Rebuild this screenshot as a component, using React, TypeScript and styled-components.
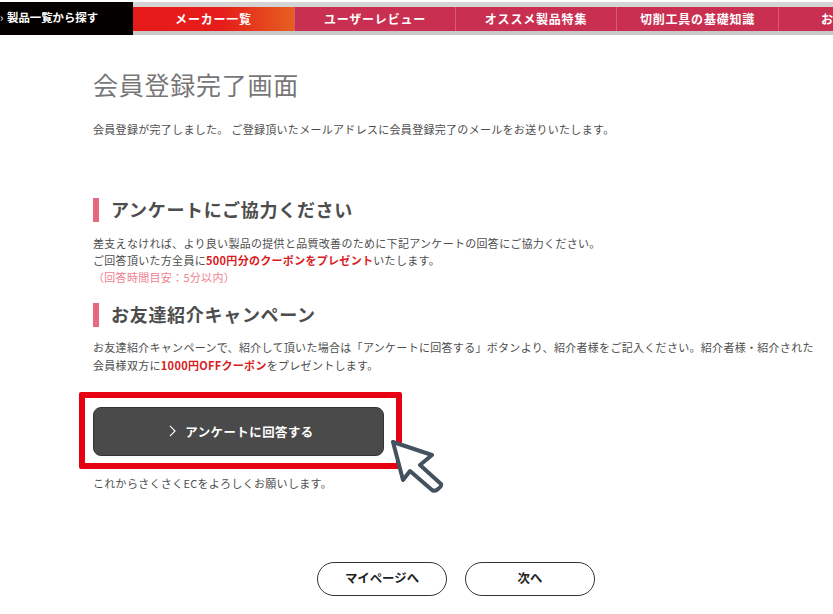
import styled, { createGlobalStyle } from "styled-components";

const GlobalStyle = createGlobalStyle`
  html, body {
    margin: 0;
    padding: 0;
    background: #fff;
    overflow: hidden;
  }
  body {
    font-family: "Noto Sans CJK JP", "Noto Sans", sans-serif;
    color: #4d4d4d;
  }
`;

const navItems = [
  { label: "メーカー一覧", width: 162, active: true },
  { label: "ユーザーレビュー", width: 161 },
  { label: "オススメ製品特集", width: 161 },
  { label: "切削工具の基礎知識", width: 162 },
  { label: "お問い合わせ", width: 162 },
];

const App = () => {
  return (
    <Page>
      <GlobalStyle />
      <Nav>
        <SearchTab>
          <TabArrow>›</TabArrow>製品一覧から探す
        </SearchTab>
        <NavBar>
          {navItems.map((item) => (
            <NavItem key={item.label} $width={item.width} $active={item.active}>
              {item.label}
            </NavItem>
          ))}
        </NavBar>
      </Nav>
      <Main>
        <Title>会員登録完了画面</Title>
        <Lead>
          会員登録が完了しました。 ご登録頂いたメールアドレスに会員登録完了のメールをお送りいたします。
        </Lead>
        <Heading $top={60}>アンケートにご協力ください</Heading>
        <Text $top={13} $leading={17}>
          差支えなければ、より良い製品の提供と品質改善のために下記アンケートの回答にご協力ください。
          <br />
          ご回答頂いた方全員に<Strong>500円分のクーポンをプレゼント</Strong>いたします。
          <br />
          <Note>（回答時間目安：5分以内）</Note>
        </Text>
        <Heading $top={17}>お友達紹介キャンペーン</Heading>
        <Text $top={11} $leading={18}>
          お友達紹介キャンペーンで、紹介して頂いた場合は「アンケートに回答する」ボタンより、紹介者様をご記入ください。紹介者様・紹介された
          <br />
          会員様双方に<Strong>1000円OFFクーポン</Strong>をプレゼントします。
        </Text>
        <CtaWrap>
          <Cta>
            <ChevronIcon viewBox="0 0 8 14">
              <path d="M1 1l6 6-6 6" fill="none" stroke="#fff" strokeWidth="1.3" />
            </ChevronIcon>
            アンケートに回答する
          </Cta>
          <Frame />
          <PointerIcon viewBox="0 0 53 53">
            <path
              d="M2 2 L41 15 L29 25 L50 44 Q51 46 47 49 Q44 52 41 50 L19 31 L12 40 Z"
              fill="#fff"
              stroke="#44525f"
              strokeWidth="4"
              strokeLinejoin="round"
            />
          </PointerIcon>
        </CtaWrap>
        <Closing>これからさくさくECをよろしくお願いします。</Closing>
        <Actions>
          <PillButton>マイページへ</PillButton>
          <PillButton>次へ</PillButton>
        </Actions>
      </Main>
    </Page>
  );
};

const Page = styled.div`
  width: 833px;
  height: 614px;
  overflow: hidden;
`;

const Nav = styled.nav`
  display: flex;
  margin-top: 2px;
  height: 33px;
  padding-top: 2px;
  background: linear-gradient(#d4d4d4 0 5px, transparent 5px 29px, #c8c8c8 29px);
  box-sizing: border-box;
`;

const SearchTab = styled.div`
  flex: 0 0 133px;
  margin-top: -2px;
  height: 33px;
  background: #040000;
  color: #fff;
  font-size: 11.4px;
  font-weight: 700;
  line-height: 30px;
  white-space: nowrap;
  box-sizing: border-box;
  display: flex;
  overflow: hidden;
`;

const TabArrow = styled.span`
  width: 7px;
  font-weight: 400;
`;

const NavBar = styled.div`
  display: flex;
  flex: 1;
  height: 24px;
  margin-top: 3px;
  background: #c92f50;
  overflow: hidden;
`;

const NavItem = styled.div<{ $width: number; $active?: boolean }>`
  flex: 0 0 ${(p) => p.$width}px;
  box-sizing: border-box;
  text-align: center;
  color: #fff;
  font-size: 12px;
  font-weight: 700;
  letter-spacing: 0.8px;
  line-height: 23px;
  white-space: nowrap;
  border-right: 1px solid #d65c76;
  background: ${(p) =>
    p.$active ? "linear-gradient(90deg, #e61a1a 0%, #e61c1a 55%, #e56020 100%)" : "transparent"};
`;

const Main = styled.main`
  padding: 0 0 0 93px;
`;

const Title = styled.h1`
  margin: 31px 0 0;
  font-size: 25px;
  font-weight: 400;
  letter-spacing: 0.75px;
  line-height: 36px;
  color: #777;
`;

const Lead = styled.p`
  margin: 19px 0 0;
  font-size: 11px;
  letter-spacing: 0.3px;
  line-height: 17px;
  white-space: nowrap;
`;

const Heading = styled.h2<{ $top: number }>`
  margin: ${(p) => p.$top}px 0 0;
  height: 24px;
  padding-left: 12px;
  border-left: 6px solid #e8697f;
  font-size: 18px;
  font-weight: 700;
  letter-spacing: 0.7px;
  line-height: 22px;
  color: #4d4d4d;
  white-space: nowrap;
`;

const Text = styled.p<{ $top: number; $leading: number }>`
  margin: ${(p) => p.$top}px 0 0;
  font-size: 11px;
  letter-spacing: 0.3px;
  line-height: ${(p) => p.$leading}px;
  white-space: nowrap;
`;

const Strong = styled.strong`
  color: #d91c24;
  font-weight: 700;
`;

const Note = styled.span`
  color: #ee7f8f;
`;

const CtaWrap = styled.div`
  position: relative;
  width: 291px;
  margin-top: 33px;
`;

const Cta = styled.div`
  height: 49px;
  box-sizing: border-box;
  display: flex;
  align-items: center;
  justify-content: center;
  gap: 9px;
  padding-left: 6px;
  background: #4a4a4a;
  border: 1px solid #333;
  border-radius: 8px;
  color: #fff;
  font-size: 12.4px;
  font-weight: 700;
  letter-spacing: 0.5px;
`;

const ChevronIcon = styled.svg`
  width: 7px;
  height: 12px;
  margin-top: -2px;
`;

const Frame = styled.div`
  position: absolute;
  left: -14px;
  top: -15px;
  width: 323px;
  height: 77px;
  box-sizing: border-box;
  border: 6px solid #e60012;
  border-radius: 2px;
`;

const PointerIcon = styled.svg`
  position: absolute;
  left: 298px;
  top: 33px;
  width: 53px;
  height: 53px;
`;

const Closing = styled.p`
  margin: 19px 0 0;
  font-size: 11px;
  letter-spacing: 0.3px;
  line-height: 17px;
`;

const Actions = styled.div`
  display: flex;
  gap: 18px;
  margin: 70px 0 0 224px;
`;

const PillButton = styled.div`
  width: 130px;
  height: 34px;
  box-sizing: border-box;
  border: 1px solid #333;
  border-radius: 17px;
  background: #fff;
  color: #222;
  font-size: 12.4px;
  font-weight: 700;
  line-height: 30px;
  text-align: center;
`;

export default App;
